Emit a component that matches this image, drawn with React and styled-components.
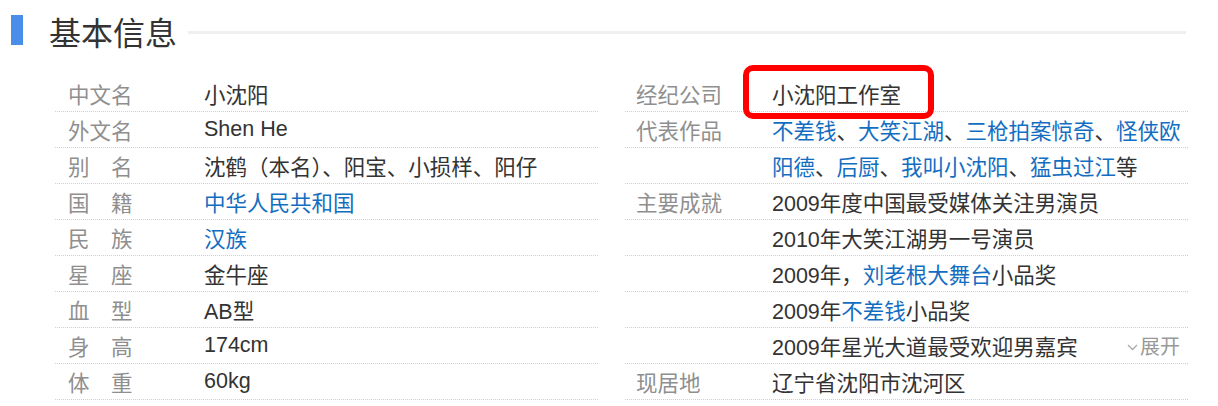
import React from 'react';
import styled, { createGlobalStyle } from 'styled-components';

const Global = createGlobalStyle`
  body {
    margin: 0;
    background: #fff;
    font-family: "Liberation Sans", "Noto Sans CJK SC", sans-serif;
  }
`;

const Wrap = styled.div`
  width: 1218px;
  height: 406px;
  overflow: hidden;
  background: #fff;
`;

const Header = styled.div`
  display: flex;
  align-items: center;
  height: 62px;
  padding: 0 32px 0 11px;
  .bar {
    width: 12px;
    height: 30px;
    background: #4a8eea;
    margin-top: -2px;
  }
  h2 {
    margin: 0 11px 0 26px;
    font-family: "Noto Sans CJK SC", sans-serif;
    font-size: 32px;
    font-weight: 400;
    color: #333;
    line-height: 1;
  }
  .line {
    flex: 1;
    height: 3px;
    background: #efefef;
    margin-top: 3px;
  }
`;

const Info = styled.div`
  display: grid;
  grid-template-columns: 543px 563px;
  column-gap: 27px;
  margin-top: 14px;
  padding-left: 55px;
`;

const Column = styled.div`
  display: flex;
  flex-direction: column;
`;

const Row = styled.div`
  display: flex;
  align-items: center;
  height: 36px;
  box-sizing: border-box;
  border-bottom: 1px dotted #cfcfcf;
  font-size: 21.5px;
  white-space: nowrap;
`;

const Label = styled.div`
  width: ${p => p.$w}px;
  flex-shrink: 0;
  box-sizing: border-box;
  padding-left: ${p => p.$pad}px;
  color: #8f8f8f;
  span {
    display: inline-block;
    width: 3em;
    text-align: justify;
    text-align-last: justify;
  }
`;

const Value = styled.div`
  flex: 1;
  display: flex;
  align-items: center;
  color: #333;
  position: relative;
  a {
    color: #136ec2;
    text-decoration: none;
  }
`;

const Highlight = styled.div`
  position: absolute;
  left: -29px;
  top: -13px;
  width: 191px;
  height: 54px;
  box-sizing: border-box;
  border: 6px solid #ff0000;
  border-radius: 10px;
  pointer-events: none;
`;

const Expand = styled.span`
  margin-left: auto;
  margin-right: 8px;
  display: flex;
  align-items: center;
  gap: 2px;
  color: #999;
  font-size: 20px;
  svg {
    margin-top: 4px;
  }
`;

const left = [
  ['中文名', '小沈阳'],
  ['外文名', 'Shen He'],
  ['别 名', '沈鹤（本名）、阳宝、小损样、阳仔'],
  ['国 籍', <a href="#">中华人民共和国</a>],
  ['民 族', <a href="#">汉族</a>],
  ['星 座', '金牛座'],
  ['血 型', 'AB型'],
  ['身 高', '174cm'],
  ['体 重', '60kg'],
];

const Chevron = () => (
  <svg width="11" height="7" viewBox="0 0 11 7">
    <polyline points="1,1 5.5,5.5 10,1" fill="none" stroke="#aaa" strokeWidth="1.3" />
  </svg>
);

const right = [
  ['经纪公司', <>小沈阳工作室<Highlight /></>],
  ['代表作品', <><a href="#">不差钱</a>、<a href="#">大笑江湖</a>、<a href="#">三枪拍案惊奇</a>、<a href="#">怪侠欧</a></>],
  ['', <><a href="#">阳德</a>、<a href="#">后厨</a>、<a href="#">我叫小沈阳</a>、<a href="#">猛虫过江</a>等</>],
  ['主要成就', '2009年度中国最受媒体关注男演员'],
  ['', '2010年大笑江湖男一号演员'],
  ['', <>2009年，<a href="#">刘老根大舞台</a>小品奖</>],
  ['', <>2009年<a href="#">不差钱</a>小品奖</>],
  ['', <>2009年星光大道最受欢迎男嘉宾<Expand><Chevron />展开</Expand></>],
  ['现居地', '辽宁省沈阳市沈河区'],
];

const renderLabel = (text) => {
  if (!text) return null;
  if (text.includes(' ')) return <span>{text}</span>;
  return text;
};

export default function App() {
  return (
    <Wrap>
      <Global />
      <Header>
        <div className="bar" />
        <h2>基本信息</h2>
        <div className="line" />
      </Header>
      <Info>
        <Column>
          {left.map(([k, v], i) => (
            <Row key={i}>
              <Label $w={149} $pad={13}>{renderLabel(k)}</Label>
              <Value>{v}</Value>
            </Row>
          ))}
        </Column>
        <Column>
          {right.map(([k, v], i) => (
            <Row key={i}>
              <Label $w={147} $pad={11}>{renderLabel(k)}</Label>
              <Value>{v}</Value>
            </Row>
          ))}
        </Column>
      </Info>
    </Wrap>
  );
}
